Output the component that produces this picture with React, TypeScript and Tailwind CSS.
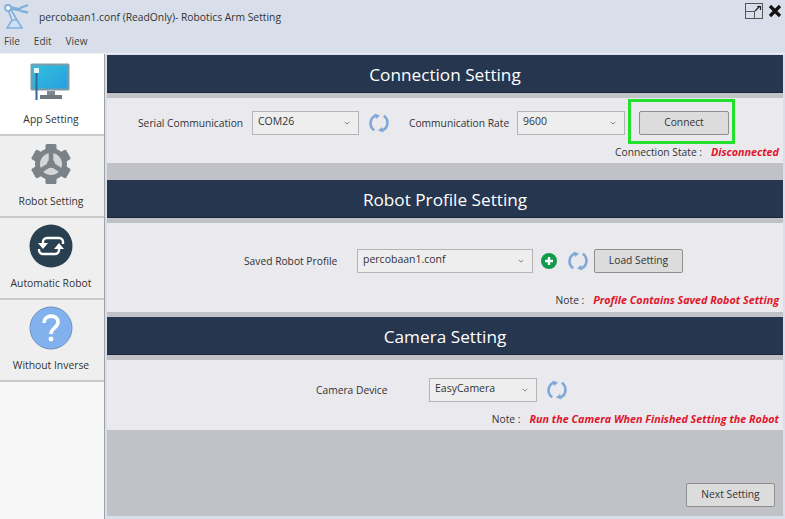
const uiFont = "font-['Open_Sans',sans-serif]";

function Refresh({ className = "" }: { className?: string }) {
  return (
    <svg viewBox="0 0 20 20" className={`w-[20px] h-[20px] ${className}`} fill="none">
      <path d="M5.2 17.2A8.4 8.4 0 0 1 6.600 2.600" stroke="#7fa8d8" strokeWidth="2.600" />
      <path d="M14.800 2.800A8.4 8.4 0 0 1 13.400 17.400" stroke="#7fa8d8" strokeWidth="2.600" />
      <path d="M5.500 0.500l5.500 2-4 3.500z" fill="#7fa8d8" />
      <path d="M14.500 19.500l-5.500-2 4-3.500z" fill="#7fa8d8" />
    </svg>
  );
}

function Combo({ value, width }: { value: string; width: string }) {
  return (
    <div className={`${width} h-[24px] flex items-center justify-between pl-[5px] pr-[8px] bg-[#eeeeee] border border-[#b4b4b4] text-[10.5px] text-[#333]`}>
      <span className="-mt-[2px]">{value}</span>
      <svg viewBox="0 0 8 5" className="w-[6px] h-[4px]" fill="none">
        <path d="M1 1l3 3 3-3" stroke="#777" strokeWidth="1.200" />
      </svg>
    </div>
  );
}

function Btn({ label, width }: { label: string; width: string }) {
  return (
    <div className={`${width} h-[24px] flex items-center justify-center bg-[#dcdcdc] border border-[#8f8f8f] rounded-[2px] text-[10.25px] text-[#333]`}>
      {label}
    </div>
  );
}

function SectionHeader({ title }: { title: string }) {
  return (
    <div className="h-[38px] pt-[3px] bg-[#26364f] flex items-center justify-center text-white text-[17.2px] border-b border-[#1b2638]">
      {title}
    </div>
  );
}

function Note({ label, text }: { label: string; text: string }) {
  return (
    <div className="flex justify-end items-center gap-[9px] pr-[4px] text-[10.25px] leading-[16px] text-[#333]">
      <span>{label}</span>
      <span className="font-bold italic text-[#e0162b] text-[10.75px]">{text}</span>
    </div>
  );
}

function NavItem({ label, icon, active }: { label: string; icon: React.ReactNode; active?: boolean }) {
  return (
    <div className={`h-[82px] pr-[2px] flex flex-col items-center border-b-2 border-[#c9c9c9] ${active ? "bg-white" : "bg-[#efefef]"}`}>
      <div className="h-[57px] flex items-center justify-center pb-[1px]">{icon}</div>
      <span className="text-[10.35px] text-[#333] leading-[14px] mt-[1px]">{label}</span>
    </div>
  );
}

const monitorIcon = (
  <svg viewBox="0 0 40 38" className="w-[40px] h-[38px] -ml-[3px]">
    <defs>
      <linearGradient id="screen" x1="0" y1="0" x2="1" y2="1">
        <stop offset="0" stopColor="#2fc0dc" />
        <stop offset="1" stopColor="#2a9fe0" />
      </linearGradient>
    </defs>
    <rect x="0.500" y="0.500" width="39" height="27" rx="1.500" fill="#7f9aa8" />
    <rect x="2.500" y="2.500" width="35" height="23" fill="url(#screen)" />
    <rect x="17" y="28" width="8" height="5" fill="#7d8a90" />
    <rect x="10" y="32" width="22" height="4" fill="#6e7a80" />
    <rect x="4" y="5" width="5" height="5" fill="#e8f4f8" />
    <rect x="5.500" y="10" width="2" height="27" fill="#2b6a9a" />
  </svg>
);

const gearTeeth = [0, 60, 120, 180, 240, 300];

const gearIcon = (
  <svg viewBox="0 0 42 40" className="w-[42px] h-[40px]">
    {gearTeeth.map((a) => (
      <rect key={a} x="15.500" y="0" width="11" height="9" rx="1.500" fill="#7b8288" transform={`rotate(${a} 21 20)`} />
    ))}
    <circle cx="21" cy="20" r="16" fill="#7b8288" />
    <circle cx="21" cy="20" r="11" fill="#d4d6d8" />
    <path d="M21 20V7M21 20L10 27M21 20l11 7" stroke="#7b8288" strokeWidth="4.500" />
    <circle cx="21" cy="20" r="4" fill="#7b8288" />
  </svg>
);

const syncIcon = (
  <svg viewBox="0 0 44 44" className="w-[44px] h-[44px]">
    <circle cx="22" cy="22" r="21.500" fill="#28404f" />
    <path d="M14 20v-2a4 4 0 0 1 4-4h12a4 4 0 0 1 4 4v2" fill="none" stroke="#fff" strokeWidth="2.400" />
    <path d="M9 19h10l-5 6z" fill="#fff" />
    <path d="M30 24v2a4 4 0 0 1-4 4H14a4 4 0 0 1-4-4v-1" fill="none" stroke="#fff" strokeWidth="2.400" />
    <path d="M25 25h10l-5-6z" fill="#fff" />
  </svg>
);

const helpIcon = (
  <svg viewBox="0 0 44 44" className="w-[44px] h-[44px]">
    <circle cx="22" cy="22" r="21" fill="#82b2ee" stroke="#6f93bd" strokeWidth="1" />
    <path d="M15 17c0-9 14-9 14-1 0 6-7 6-7 12" fill="none" stroke="#fff" strokeWidth="3.600" />
    <circle cx="22" cy="33" r="2.400" fill="#fff" />
  </svg>
);

export default function App() {
  return (
    <div className={`w-[785px] h-[519px] flex flex-col bg-[#d9dfea] overflow-hidden ${uiFont}`}>
      <header className="h-[53px] shrink-0 flex flex-col">
        <div className="h-[34px] flex items-start pl-[4px] pt-[1px]">
          <svg viewBox="0 0 26 30" className="w-[26px] h-[30px] shrink-0">
            <path d="M3 27h15l-5-8h-5zM8 19l-4-10M13 19l-7-12" fill="#cfe0f2" stroke="#7fb0dc" strokeWidth="1.600" />
            <circle cx="4" cy="7" r="3" fill="#fff" stroke="#7fb0dc" strokeWidth="1.800" />
            <path d="M7 7l10 2" stroke="#7fb0dc" strokeWidth="3.600" />
            <path d="M16 7l8-3M17 10l7 1.500" stroke="#7fb0dc" strokeWidth="2.400" />
          </svg>
          <span className="ml-[9px] mt-[9px] text-[10.3px] leading-[15px] text-[#333]">percobaan1.conf (ReadOnly)- Robotics Arm Setting</span>
          <div className="ml-auto mr-[3px] mt-[2px] flex items-center gap-[5px]">
            <svg viewBox="0 0 18 16" className="w-[18px] h-[16px]" fill="none">
              <rect x="0.500" y="0.500" width="17" height="15" stroke="#555" />
              <rect x="0.500" y="8.500" width="9" height="7" stroke="#555" />
              <path d="M10 8l5-5M12 3.500h3.500V7" stroke="#222" strokeWidth="1.200" />
            </svg>
            <svg viewBox="0 0 14 14" className="w-[14px] h-[14px]">
              <path d="M2 2l10 10M12 2L2 12" stroke="#111" strokeWidth="3.200" />
            </svg>
          </div>
        </div>
        <nav className="flex gap-[14px] pl-[4px] text-[10px] leading-[14px] text-[#444]">
          <span>File</span>
          <span>Edit</span>
          <span>View</span>
        </nav>
      </header>

      <div className="flex-1 flex min-h-0 border-t border-[#eef0f4]">
        <aside className="w-[105px] shrink-0 bg-[#f7f7f7] border-r border-[#9ea2a8]">
          <NavItem label="App Setting" active icon={monitorIcon} />
          <NavItem label="Robot Setting" icon={gearIcon} />
          <NavItem label="Automatic Robot" icon={syncIcon} />
          <NavItem label="Without Inverse" icon={helpIcon} />
        </aside>

        <main className="w-[676px] ml-[2px] mb-[3px] mt-[1px] bg-[#c0c2c7] flex flex-col">
          <SectionHeader title="Connection Setting" />
          <section className="mt-[5px] h-[65px] bg-[#e9e9ee] flex flex-col">
            <div className="h-[46px] pt-[4px] flex items-center pl-[31px] text-[10.25px] text-[#333]">
              <span className="w-[114px] mt-[2px]">Serial Communication</span>
              <Combo value="COM26" width="w-[107px]" />
              <Refresh className="ml-[10px]" />
              <span className="w-[108px] ml-[20px] mt-[2px]">Communication Rate</span>
              <Combo value="9600" width="w-[108px]" />
              <div className="relative ml-[14px]">
                <Btn label="Connect" width="w-[90px]" />
                <div className="absolute -left-[11px] -top-[12px] w-[107px] h-[45px] border-[3px] border-[#22e02c]" />
              </div>
            </div>
            <Note label="Connection State :" text="Disconnected" />
          </section>

          <div className="mt-[17px]">
            <SectionHeader title="Robot Profile Setting" />
          </div>
          <section className="mt-[5px] h-[89px] bg-[#e9e9ee] flex flex-col">
            <div className="h-[69px] pt-[7px] flex items-center pl-[137px] text-[10.25px] text-[#333]">
              <span className="w-[113px] mt-[1px]">Saved Robot Profile</span>
              <Combo value="percobaan1.conf" width="w-[176px]" />
              <svg viewBox="0 0 16 16" className="w-[16px] h-[16px] ml-[8px]">
                <circle cx="8" cy="8" r="8" fill="#109a4a" />
                <path d="M8 4v8M4 8h8" stroke="#fff" strokeWidth="2.400" />
              </svg>
              <Refresh className="ml-[11px]" />
              <Btn label="Load Setting" width="w-[89px] ml-[6px]" />
            </div>
            <Note label="Note :" text="Profile Contains Saved Robot Setting" />
          </section>

          <div className="mt-[5px]">
            <SectionHeader title="Camera Setting" />
          </div>
          <section className="mt-[5px] h-[70px] bg-[#e9e9ee] flex flex-col">
            <div className="h-[51px] pt-[9px] flex items-center pl-[209px] text-[10.25px] text-[#333]">
              <span className="w-[113px] mt-[1px]">Camera Device</span>
              <Combo value="EasyCamera" width="w-[108px]" />
              <Refresh className="ml-[10px]" />
            </div>
            <Note label="Note :" text="Run the Camera When Finished Setting the Robot" />
          </section>

          <div className="flex-1 flex items-end justify-end pr-[8px] pb-[9px]">
            <Btn label="Next Setting" width="w-[89px]" />
          </div>
        </main>
      </div>
    </div>
  );
}
